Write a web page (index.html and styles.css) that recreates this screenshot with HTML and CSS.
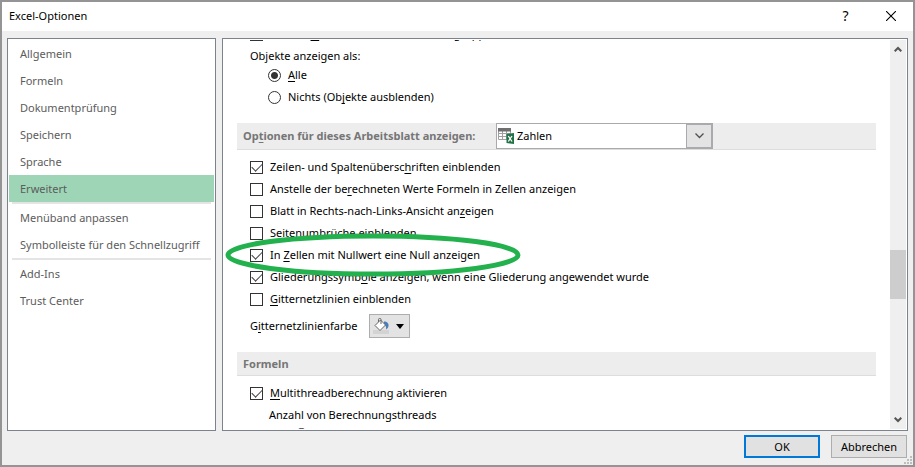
FILE: index.html
```
<!DOCTYPE html>
<html lang="de">
<head>
  <meta charset="UTF-8">
  <meta name="viewport" content="width=device-width, initial-scale=1.0">
  <title>Excel-Optionen</title>
  <link rel="stylesheet" href="styles.css">
</head>
<body>
<div class="dialog">
  <header class="titlebar">
    <h1>Excel-Optionen</h1>
    <button class="title-btn" type="button" aria-label="Hilfe">?</button>
    <button class="title-btn" type="button" aria-label="Schließen">
      <svg width="10" height="10" viewBox="0 0 10 10"><path d="M0 0L10 10M10 0L0 10" stroke="#000" stroke-width="1.1"/></svg>
    </button>
  </header>

  <div class="main">
    <nav class="sidebar">
      <a href="#">Allgemein</a>
      <a href="#">Formeln</a>
      <a href="#">Dokumentprüfung</a>
      <a href="#">Speichern</a>
      <a href="#">Sprache</a>
      <a href="#" class="active">Erweitert</a>
      <hr>
      <a href="#">Menüband anpassen</a>
      <a href="#">Symbolleiste für den Schnellzugriff</a>
      <hr>
      <a href="#">Add-Ins</a>
      <a href="#">Trust Center</a>
    </nav>

    <div class="panel">
      <div class="view">
        <div class="content">
          <label class="row"><input type="checkbox"><span>Datums<u>w</u>erte im Menü "AutoFilter" gruppieren</span></label>
          <div class="row group-label">Objekte anzeigen als:</div>
          <label class="row sub"><input type="radio" name="objekte" checked><span><u>A</u>lle</span></label>
          <label class="row sub"><input type="radio" name="objekte"><span>Nichts (Ob<u>j</u>ekte ausblenden)</span></label>

          <div class="section">
            <label for="blatt">Op<u>t</u>ionen für dieses Arbeitsblatt anzeigen:</label>
            <div class="combo">
              <svg class="sheet-icon" width="16" height="16" viewBox="0 0 16 16">
                <path d="M0 0h13v12H0z" fill="#fff"/>
                <path d="M.5 3v8.500h12V3M.5 5.500h12M.5 8.500h12M4.500 3v8.500M8.500 3v8.500" fill="none" stroke="#a0a0a0"/>
                <path d="M0 0h13v3.500H0z" fill="#6f6f6f"/>
                <path d="M8.500 6L16 5v11l-7.500-1z" fill="#217346"/>
                <path d="M10.300 8l3.700 5.500M14 8l-3.700 5.500" stroke="#fff" stroke-width="1.300"/>
              </svg>
              <select id="blatt"><option>Zahlen</option></select>
              <span class="combo-arrow"><svg width="9" height="6" viewBox="0 0 9 6"><path d="M.5 .5l4 4l4-4" fill="none" stroke="#505050" stroke-width="1.300"/></svg></span>
            </div>
          </div>
          <label class="row"><input type="checkbox" checked><span>Zeilen- und Spaltenübersc<u>h</u>riften einblenden</span></label>
          <label class="row"><input type="checkbox"><span>Anstelle der be<u>r</u>echneten Werte Formeln in Zellen anzeigen</span></label>
          <label class="row"><input type="checkbox"><span>Blatt in Rechts-nach-Links-Ansicht an<u>z</u>eigen</span></label>
          <label class="row"><input type="checkbox"><span>Se<u>i</u>tenumbrüche einblenden</span></label>
          <label class="row marked">
            <input type="checkbox" checked><span>In <u>Z</u>ellen mit Nullwert eine Null anzeigen</span>
            <svg class="marker" width="296" height="44" viewBox="0 0 296 44"><ellipse cx="148" cy="22" rx="145" ry="19" fill="none" stroke="#22b14c" stroke-width="5"/></svg>
          </label>
          <label class="row"><input type="checkbox" checked><span>Gliederungssymb<u>o</u>le anzeigen, wenn eine Gliederung angewendet wurde</span></label>
          <label class="row"><input type="checkbox"><span><u>G</u>itternetzlinien einblenden</span></label>
          <div class="row color-row">
            <label for="farbe">G<u>i</u>tternetzlinienfarbe</label>
            <button class="color-btn" id="farbe" type="button">
              <svg width="17" height="16" viewBox="0 0 17 16">
                <path d="M0 12h16v4H0z" fill="#d3d3d3"/>
                <path d="M11 3.500c3 0 5 2 4.500 4.500c-.2 1.500-1 2.500-2.500 3.500c.4-2 .2-3.500-2-5z" fill="#4a7ebb"/>
                <path d="M2 7.500L7.500 2l5 5L7 12.500z" fill="#fff" stroke="#666"/>
                <path d="M5.500 4V1.500q0-1 1-1h.5q1 0 1 1V6" fill="none" stroke="#666"/>
              </svg>
              <svg width="8" height="5" viewBox="0 0 8 5"><path d="M0 0h8L4 5z" fill="#000"/></svg>
            </button>
          </div>

          <div class="section formulas"><h2>Formeln</h2></div>
          <label class="row"><input type="checkbox" checked><span><u>M</u>ultithreadberechnung aktivieren</span></label>
          <div class="row threads">Anzahl von Berechnungsthreads</div>
          <div class="row sub-radio"><input type="radio" name="threads" aria-label="Alle Prozessoren verwenden"></div>
        </div>
      </div>
      <div class="scrollbar">
        <svg width="8" height="6" viewBox="0 0 8 6"><path d="M.7 5.300L4 2l3.300 3.300" fill="none" stroke="#555" stroke-width="2"/></svg>
        <div class="thumb"></div>
        <svg width="8" height="6" viewBox="0 0 8 6"><path d="M.7 .7L4 4l3.300-3.300" fill="none" stroke="#555" stroke-width="2"/></svg>
      </div>
    </div>
  </div>

  <footer class="footer">
    <button class="btn default" type="button">OK</button>
    <button class="btn" type="button">Abbrechen</button>
    <svg class="grip" width="9" height="9" viewBox="0 0 9 9"><path d="M6 0h2v2H6zM3 3h2v2H3zM6 3h2v2H6zM0 6h2v2H0zM3 6h2v2H3zM6 6h2v2H6z" fill="#bdbdbd"/></svg>
  </footer>
</div>
</body>
</html>
```

FILE: styles.css
```
* { box-sizing: border-box; }
body { margin: 0; font-family: "Noto Sans", "Open Sans", sans-serif; font-size: 11px; line-height: 16px; color: #000; }
button, select { font: inherit; color: inherit; }
svg { display: block; flex: none; }
u { text-decoration: underline; text-underline-offset: 2px; text-decoration-skip-ink: none; }

.dialog { display: flex; flex-direction: column; height: 100vh; background: #efefef; border: 2px solid #949494; }

.titlebar { display: flex; align-items: center; height: 29px; padding: 0 0 2px 7px; background: #fff; }
.titlebar h1 { flex: 1; margin: 0; font-size: 11px; font-weight: normal; }
.title-btn { display: flex; align-items: center; justify-content: center; width: 45px; height: 27px; padding: 0; border: 0; background: none; font-size: 14px; }

.main { display: flex; flex: 1; gap: 6px; min-height: 0; padding: 7px 5px 0 5px; }

.sidebar { width: 209px; flex: none; padding: 1px; background: #fff; border: 1px solid #7c838c; }
.sidebar a { display: block; padding: 0 11px; line-height: 27px; color: #5c5c5c; text-decoration: none; white-space: nowrap; }
.sidebar .active { background: #9fd5b7; }
.sidebar hr { height: 2px; margin: 0 3px; border: 0; background: #e4e4e4; }

.panel { display: flex; flex: 1; min-width: 0; padding: 1px; background: #fff; border: 1px solid #7c838c; }
.view { flex: 1; min-width: 0; overflow: hidden; }
/* list is scrolled down to the worksheet options */
.content { margin-top: -17px; padding: 0 14px 0 13px; }

.row { display: flex; align-items: center; gap: 7px; height: 22px; padding-left: 13px; white-space: nowrap; }
.row input { flex: none; width: 13px; height: 13px; margin: 0; appearance: none; background: #fff; border: 1px solid #333; }
.row input[type="radio"] { border-radius: 50%; }
.row input[type="radio"]:checked { background: radial-gradient(circle, #333 3px, #fff 4px); }
.row input[type="checkbox"]:checked::before { content: ""; display: block; width: 9px; height: 5px; margin: 1px 0 0 1px; border: solid #444; border-width: 0 0 1px 1px; transform: rotate(-45deg); }
.group-label { height: 19px; padding-top: 3px; }
.sub { padding-left: 31px; }
.sub-radio { padding-left: 58px; }
.threads { height: 19px; padding: 2px 0 0 32px; }

.section { display: flex; align-items: center; height: 27px; margin: 15px 0 6px; padding-left: 6px; background: #ededed; border-bottom: 1px solid #ddd; color: #767676; font-weight: bold; }
.section h2 { margin: 0; font-size: 11px; }
.section label { width: 253px; white-space: nowrap; }
.formulas { height: 24px; margin-top: 10px; }

.combo { display: flex; align-items: center; width: 217px; height: 26px; background: #fff; border: 1px solid #a9a9ae; color: #000; font-weight: normal; }
.sheet-icon { margin: 0 3px 0 1px; }
.combo select { flex: 1; min-width: 0; padding: 0; border: 0; background: none; appearance: none; }
.combo-arrow { display: flex; align-items: center; justify-content: center; width: 26px; height: 24px; background: #e3e3e3; border: 1px solid #a9a9ae; }

.marked { position: relative; }
.marker { position: absolute; left: -12px; top: -11px; }

.color-row { height: 32px; gap: 12px; }
.color-btn { display: flex; align-items: center; gap: 6px; width: 41px; height: 24px; padding: 0 3px; background: #e3e3e3; border: 1px solid #adadad; }

.scrollbar { display: flex; flex-direction: column; align-items: center; width: 16px; padding: 6px 0; background: #efefef; }
.thumb { width: 16px; height: 49px; margin: 198px 0 auto; background: #cdcdcd; }

.footer { display: flex; justify-content: flex-end; gap: 11px; height: 34px; padding: 4px 6px 0; position: relative; }
.btn { width: 76px; height: 23px; padding: 0; background: #e1e1e1; border: 1px solid #adadad; line-height: 18px; }
.btn.default { border: 2px solid #0078d7; }
.grip { position: absolute; right: 0; bottom: 0; }
```
